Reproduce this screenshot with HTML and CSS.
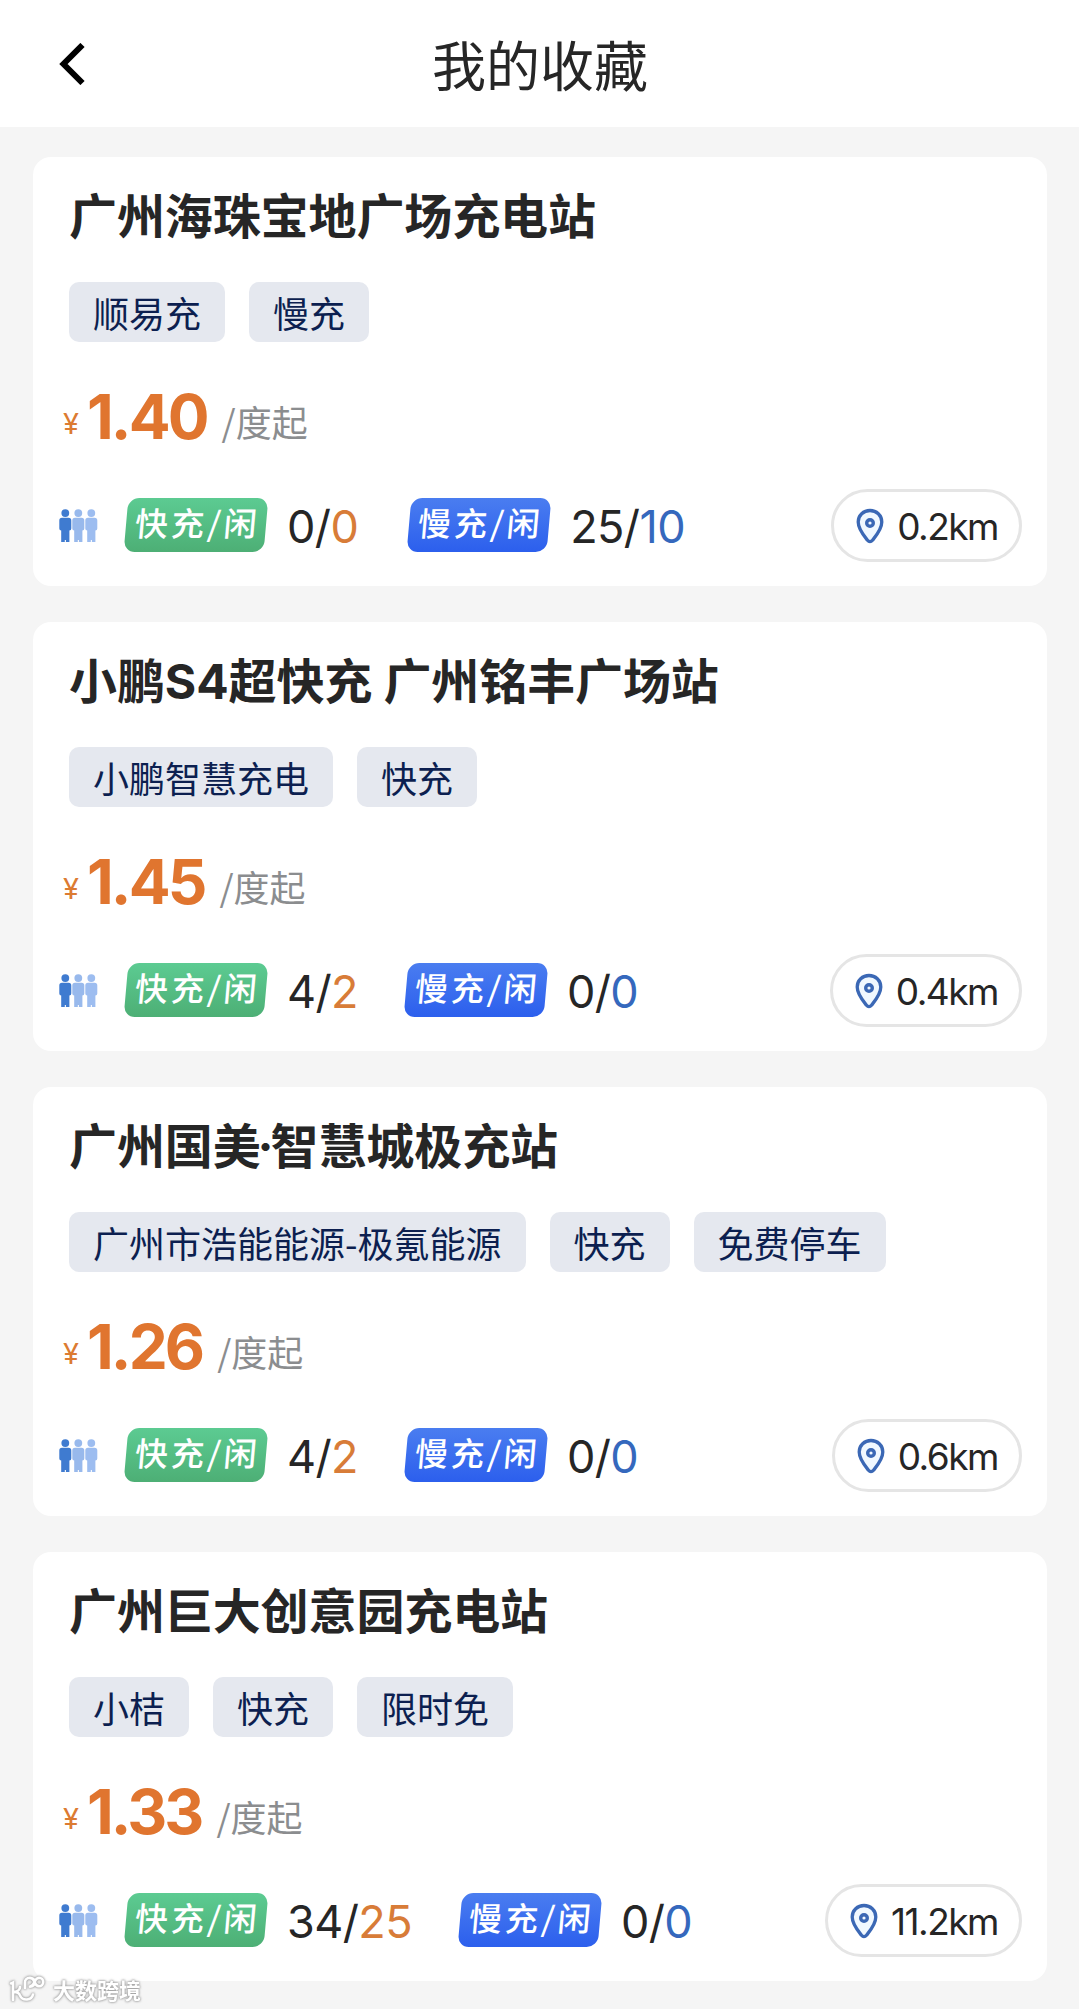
FILE: index.html
```html
<!DOCTYPE html>
<html lang="zh-CN">
<head>
<meta charset="utf-8">
<title>我的收藏</title>
<link rel="stylesheet" href="styles.css">
</head>
<body>
<svg class="sprite" aria-hidden="true">
  <symbol id="people" viewBox="0 0 39 34">
    <g fill="#3f7bd0"><circle cx="6.300" cy="4.100" r="3.900"/><path d="M3 8.800h6.600q2.700 0 2.700 2.700v8q0 2-1.900 2V33H6.900v-2H5.800v2H2.200V21.500Q.3 21.500.3 19.500v-8q0-2.700 2.700-2.700z"/></g>
    <g fill="#98b9ec"><circle cx="19.300" cy="4.100" r="3.900"/><path d="M16 8.800h6.600q2.700 0 2.700 2.700v8q0 2-1.900 2V33h-3.500v-2h-1.100v2h-3.600V21.500q-1.900 0-1.900-2v-8q0-2.700 2.700-2.700z"/></g>
    <g fill="#9dbdf0"><circle cx="32.300" cy="4.100" r="3.900"/><path d="M29 8.800h6.600q2.700 0 2.700 2.700v8q0 2-1.900 2V33h-3.500v-2h-1.100v2h-3.600V21.500q-1.900 0-1.900-2v-8q0-2.700 2.700-2.700z"/></g>
  </symbol>
  <symbol id="pin" viewBox="0 0 28 36">
    <path d="M14 2.500C7.500 2.500 2.200 7.400 2.200 14c0 7.200 5.300 13.200 9.300 18.200 1.500 1.800 3.500 1.800 5 0 4-5 9.300-11 9.300-18.200C25.800 7.400 20.500 2.500 14 2.500z" fill="#f0f8ff" stroke="#3b68b5" stroke-width="3.300"/>
    <circle cx="14" cy="15" r="3.300" fill="none" stroke="#3b68b5" stroke-width="3.400"/>
  </symbol>
</svg>

<header class="topbar">
  <svg class="back" viewBox="0 0 26 42"><path d="M23.500 2L4.500 21l19 19" fill="none" stroke="#000" stroke-width="6"/></svg>
  <h1>我的收藏</h1>
</header>

<main class="list">
  <article class="card">
    <h2>广州海珠宝地广场充电站</h2>
    <div class="tags"><span>顺易充</span><span>慢充</span></div>
    <div class="price"><i>¥</i><b>1.40</b><em>/度起</em></div>
    <div class="status">
      <svg class="people"><use href="#people"/></svg>
      <span class="badge fast"><span>快充/闲</span></span><span class="count idle">0/<b>0</b></span>
      <span class="badge slow"><span>慢充/闲</span></span><span class="count blue">25/<b>10</b></span>
      <span class="distance"><svg><use href="#pin"/></svg>0.2km</span>
    </div>
  </article>
  <article class="card">
    <h2>小鹏S4超快充 广州铭丰广场站</h2>
    <div class="tags"><span>小鹏智慧充电</span><span>快充</span></div>
    <div class="price"><i>¥</i><b>1.45</b><em>/度起</em></div>
    <div class="status">
      <svg class="people"><use href="#people"/></svg>
      <span class="badge fast"><span>快充/闲</span></span><span class="count">4/<b>2</b></span>
      <span class="badge slow"><span>慢充/闲</span></span><span class="count blue">0/<b>0</b></span>
      <span class="distance"><svg><use href="#pin"/></svg>0.4km</span>
    </div>
  </article>
  <article class="card">
    <h2>广州国美<span class="dot">·</span>智慧城极充站</h2>
    <div class="tags"><span>广州市浩能能源-极氪能源</span><span>快充</span><span>免费停车</span></div>
    <div class="price"><i>¥</i><b>1.26</b><em>/度起</em></div>
    <div class="status">
      <svg class="people"><use href="#people"/></svg>
      <span class="badge fast"><span>快充/闲</span></span><span class="count">4/<b>2</b></span>
      <span class="badge slow"><span>慢充/闲</span></span><span class="count blue">0/<b>0</b></span>
      <span class="distance"><svg><use href="#pin"/></svg>0.6km</span>
    </div>
  </article>
  <article class="card">
    <h2>广州巨大创意园充电站</h2>
    <div class="tags"><span>小桔</span><span>快充</span><span>限时免</span></div>
    <div class="price"><i>¥</i><b>1.33</b><em>/度起</em></div>
    <div class="status">
      <svg class="people"><use href="#people"/></svg>
      <span class="badge fast"><span>快充/闲</span></span><span class="count">34/<b>25</b></span>
      <span class="badge slow"><span>慢充/闲</span></span><span class="count blue">0/<b>0</b></span>
      <span class="distance"><svg><use href="#pin"/></svg>11.2km</span>
    </div>
  </article>
</main>

<div class="watermark">
  <svg viewBox="0 0 38 28"><path d="M3 8.500l2-1V25M12 12q0 4-6 5 5 0 6 3.500 2 4.500 7 4 5-.5 6-5M17 13V7.500a5 4.500 0 1 1 5 4.200M22 3q3 0 4.500 4t4.500 4.200a4.200 4.200 0 1 0 0-8.400q-3 .2-4.500 4.200T22 11.500" fill="none" stroke="#fff" stroke-width="2.600" stroke-linecap="round"/></svg>
  <span>大数跨境</span>
</div>
</body>
</html>
```
FILE: styles.css
```css
* { box-sizing: border-box; }

body {
  margin: 0;
  height: 2009px;
  overflow: hidden;
  background: #f5f5f5;
  color: #262626;
  font-family: Inter, "Noto Sans CJK SC", sans-serif;
}

h1, h2 { margin: 0; }
i, em { font-style: normal; }
svg { display: block; flex: none; }
.sprite { position: absolute; width: 0; height: 0; }

.topbar {
  display: grid;
  grid-template-columns: 85px 1fr 84px;
  align-items: center;
  height: 127px;
  background: #fff;
}
.back { width: 26px; height: 42px; justify-self: end; }
.topbar h1 {
  text-align: center;
  font: 400 54px/80px "Noto Sans CJK SC", sans-serif;
}

.list {
  display: flex;
  flex-direction: column;
  gap: 36px;
  padding: 30px 32px 0 33px;
}
.card {
  height: 429px;
  padding: 30px 25px 24px 36px;
  border-radius: 18px;
  background: #fff;
}
.card h2 {
  font: 700 48px/60px Inter, "Noto Sans CJK SC", sans-serif;
  letter-spacing: -0.1px;
  white-space: nowrap;
}
.dot { margin: 0 -3px; }

.tags { display: flex; gap: 24px; margin-top: 35px; }
.tags span {
  height: 60px;
  padding: 0 24px;
  border-radius: 10px;
  background: #e5e8ef;
  color: #0c1f50;
  font: 400 36px/60px "Noto Sans CJK SC", sans-serif;
}

.price {
  display: flex;
  align-items: baseline;
  height: 68px;
  margin: 41px 0 38px -6px;
  line-height: 68px;
}
.price i {
  width: 24px;
  color: #dc7b32;
  font-size: 29px;
  transform: translateY(-5px);
}
.price b { color: #e0752f; font-size: 62px; font-weight: 700; letter-spacing: -2.9px; }
.price em {
  margin-left: 15px;
  color: #8b8d8f;
  font-size: 36px;
  font-family: "Noto Sans CJK SC", sans-serif;
  transform: translateY(-2px);
}

.status { display: flex; align-items: center; height: 73px; margin-left: -10px; }
.people { width: 39px; height: 34px; margin-right: 28px; }
.badge {
  width: 140px;
  height: 54px;
  padding-left: 9px;
  border-radius: 11px;
  transform: translateY(-1px) skewX(-5deg);
  color: #fff;
  font: 500 33px/49px "Noto Sans CJK SC", sans-serif;
  letter-spacing: 3.3px;
  white-space: nowrap;
}
.fast { background: linear-gradient(#5ccb92, #4daf75); }
.slow { background: linear-gradient(#4a7df0, #2c5fed); }
.count {
  margin: 0 48px 0 21px;
  padding-top: 2px;
  font-size: 45px;
  line-height: 54px;
  letter-spacing: -0.6px;
}
.count.idle { margin-right: 51px; }
.count b { font-weight: 400; color: #d87c38; }
.count.blue b { color: #3568bd; }
.distance {
  display: flex;
  align-items: center;
  gap: 13px;
  height: 73px;
  margin-left: auto;
  padding: 2px 21px 0 22px;
  border: 3px solid #e5e5e5;
  border-radius: 37px;
  font-size: 37px;
  letter-spacing: -1.5px;
  white-space: nowrap;
}
.distance svg { width: 28px; height: 36px; margin-top: -2px; }

.watermark {
  position: absolute;
  left: 8px;
  top: 1972px;
  display: flex;
  align-items: center;
  gap: 7px;
  color: #fff;
  font: 700 22px/34px "Noto Sans CJK SC", sans-serif;
  filter: drop-shadow(0 0 1px #999) drop-shadow(0 0 1px #bbb);
}
.watermark svg { width: 38px; height: 28px; }
```
